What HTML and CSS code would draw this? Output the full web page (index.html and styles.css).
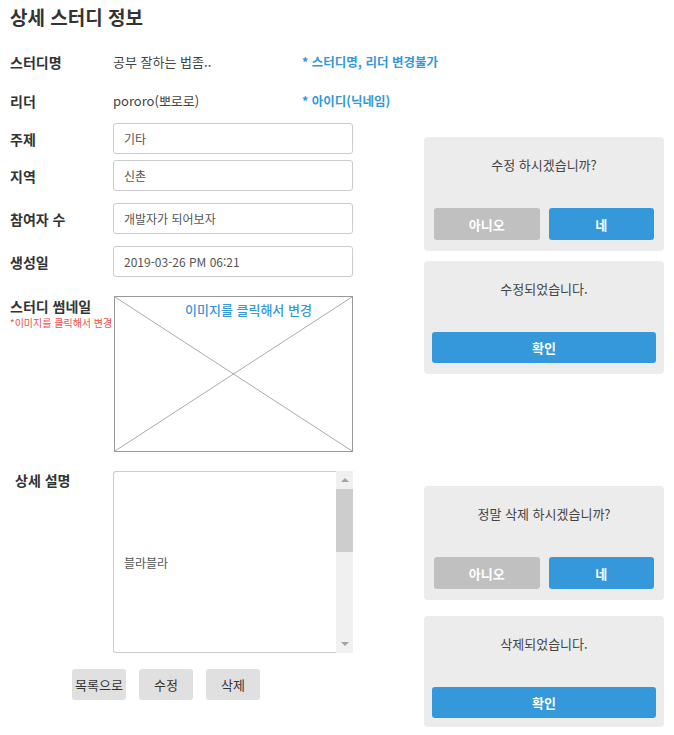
FILE: index.html
```html
<!DOCTYPE html>
<html lang="ko">
<head>
    <meta charset="UTF-8">
    <meta name="viewport" content="width=device-width, initial-scale=1.0">
    <title>상세 스터디 정보</title>
    <link rel="stylesheet" href="styles.css">
</head>
<body>
    <div class="page">
        <main class="detail">
            <h1>상세 스터디 정보</h1>
            <div class="info">
                <div class="info-row">
                    <span class="label">스터디명</span>
                    <span class="value">공부 잘하는 법좀..</span>
                    <span class="note">* 스터디명, 리더 변경불가</span>
                </div>
                <div class="info-row">
                    <span class="label">리더</span>
                    <span class="value">pororo(뽀로로)</span>
                    <span class="note">* 아이디(닉네임)</span>
                </div>
            </div>
            <div class="field first">
                <label class="label">주제</label>
                <div class="input">기타</div>
            </div>
            <div class="field near">
                <label class="label">지역</label>
                <div class="input">신촌</div>
            </div>
            <div class="field">
                <label class="label">참여자 수</label>
                <div class="input">개발자가 되어보자</div>
            </div>
            <div class="field">
                <label class="label">생성일</label>
                <div class="input">2019-03-26 PM 06:21</div>
            </div>
            <div class="thumb-row">
                <div class="thumb-label">
                    <span class="label">스터디 썸네일</span>
                    <span class="warn">*이미지를 클릭해서 변경</span>
                </div>
                <div class="thumb">
                    <svg viewBox="0 0 239 155" preserveAspectRatio="none">
                        <line x1="0" y1="0" x2="239" y2="155" />
                        <line x1="239" y1="0" x2="0" y2="155" />
                    </svg>
                    <span class="thumb-text">이미지를 클릭해서 변경</span>
                </div>
            </div>
            <div class="desc-row">
                <span class="label desc-label">상세 설명</span>
                <div class="desc">
                    <div class="desc-text">블라블라</div>
                    <div class="scrollbar">
                        <span class="arrow up"></span>
                        <span class="thumbbar"></span>
                        <span class="arrow down"></span>
                    </div>
                </div>
            </div>
            <div class="actions">
                <button class="btn">목록으로</button>
                <button class="btn">수정</button>
                <button class="btn">삭제</button>
            </div>
        </main>
        <aside class="dialogs">
            <div class="dialog">
                <p>수정 하시겠습니까?</p>
                <div class="dialog-buttons">
                    <button class="no">아니오</button>
                    <button class="yes">네</button>
                </div>
            </div>
            <div class="dialog notice">
                <p>수정되었습니다.</p>
                <button class="yes">확인</button>
            </div>
            <div class="dialog delete">
                <p>정말 삭제 하시겠습니까?</p>
                <div class="dialog-buttons">
                    <button class="no">아니오</button>
                    <button class="yes">네</button>
                </div>
            </div>
            <div class="dialog notice last">
                <p>삭제되었습니다.</p>
                <button class="yes">확인</button>
            </div>
        </aside>
    </div>
</body>
</html>
```

FILE: styles.css
```css
body {
    font-family: "Noto Sans CJK KR", "Noto Sans", sans-serif;
    color: #333;
    background: white;
    margin: 0;
    padding: 0 10px;
}
.page {
    display: flex;
}
.detail {
    width: 414px;
    flex: none;
}
h1 {
    font-size: 19px;
    font-weight: bold;
    line-height: 34px;
    height: 34px;
    margin: 0;
}
.info {
    margin-top: 8px;
}
.info-row {
    display: flex;
    align-items: center;
    height: 39px;
}
.label {
    font-size: 14px;
    font-weight: bold;
    color: #333;
}
.info-row .label,
.field .label {
    width: 103px;
    flex: none;
}
.value {
    width: 189px;
    flex: none;
    font-size: 13px;
    color: #444;
}
.note {
    flex: none;
    white-space: nowrap;
    font-size: 12.5px;
    font-weight: 600;
    color: #3498db;
}
.field {
    display: flex;
    align-items: center;
    margin-top: 12px;
}
.field.first {
    margin-top: 3px;
}
.field.near {
    margin-top: 6px;
}
.input {
    box-sizing: border-box;
    width: 240px;
    height: 31px;
    border: 1px solid #ccc;
    border-radius: 3px;
    padding: 0 10px;
    font-size: 12px;
    line-height: 29px;
    color: #555;
}
.thumb-row {
    display: flex;
    margin-top: 19px;
}
.thumb-label {
    width: 104px;
    flex: none;
    display: flex;
    flex-direction: column;
}
.thumb-label .label {
    line-height: 20px;
}
.warn {
    font-size: 10px;
    line-height: 14px;
    color: #f0504a;
    white-space: nowrap;
}
.thumb {
    position: relative;
    box-sizing: border-box;
    width: 239px;
    height: 156px;
    border: 1px solid #999;
}
.thumb svg {
    display: block;
    width: 100%;
    height: 100%;
}
.thumb line {
    stroke: #aaa;
    stroke-width: 1;
}
.thumb-text {
    position: absolute;
    top: 3px;
    left: 70px;
    font-size: 13px;
    font-weight: 500;
    color: #3498db;
}
.desc-row {
    display: flex;
    margin-top: 19px;
}
.desc-label {
    width: 98px;
    flex: none;
    padding-left: 5px;
    line-height: 18px;
}
.desc {
    display: flex;
    width: 240px;
    height: 182px;
}
.desc-text {
    flex: 1;
    display: flex;
    align-items: center;
    border: 1px solid #ccc;
    border-right: none;
    border-radius: 3px 0 0 3px;
    padding-left: 10px;
    font-size: 12px;
    color: #555;
}
.scrollbar {
    width: 17px;
    background: #f0f0f0;
    display: flex;
    flex-direction: column;
}
.arrow {
    height: 18px;
    display: flex;
    align-items: center;
    justify-content: center;
}
.arrow::before {
    content: "";
    border-left: 4px solid transparent;
    border-right: 4px solid transparent;
}
.arrow.up::before {
    border-bottom: 4px solid #a3a3a3;
}
.arrow.down::before {
    border-top: 4px solid #a3a3a3;
}
.thumbbar {
    height: 63px;
    background: #cdcdcd;
}
.arrow.down {
    margin-top: auto;
}
.actions {
    display: flex;
    gap: 13px;
    margin-top: 16px;
    padding-left: 62px;
}
.btn {
    width: 54px;
    height: 31px;
    padding: 0;
    border: none;
    border-radius: 3px;
    background: #e0e0e0;
    font-family: inherit;
    font-size: 13px;
    color: #333;
}
.dialogs {
    width: 240px;
    flex: none;
    padding-top: 137px;
    display: flex;
    flex-direction: column;
}
.dialog {
    background: #ececec;
    border-radius: 4px;
    padding: 18px 10px 11px;
    margin-bottom: 10px;
}
.dialog.delete {
    margin-top: 102px;
    margin-bottom: 16px;
}
.dialog.last {
    padding-bottom: 9px;
}
.dialog p {
    margin: 0 0 33px;
    font-size: 13px;
    line-height: 20px;
    text-align: center;
    color: #444;
}
.dialog-buttons {
    display: flex;
    gap: 9px;
}
.dialog button {
    flex: 1;
    height: 32px;
    border: none;
    border-radius: 3px;
    color: white;
    font-family: inherit;
    font-size: 13px;
    font-weight: bold;
}
.dialog.notice {
    padding-left: 8px;
    padding-right: 8px;
}
.dialog.notice button {
    width: 100%;
    height: 31px;
}
.no {
    background: #c0c0c0;
}
.yes {
    background: #3498db;
}
```
